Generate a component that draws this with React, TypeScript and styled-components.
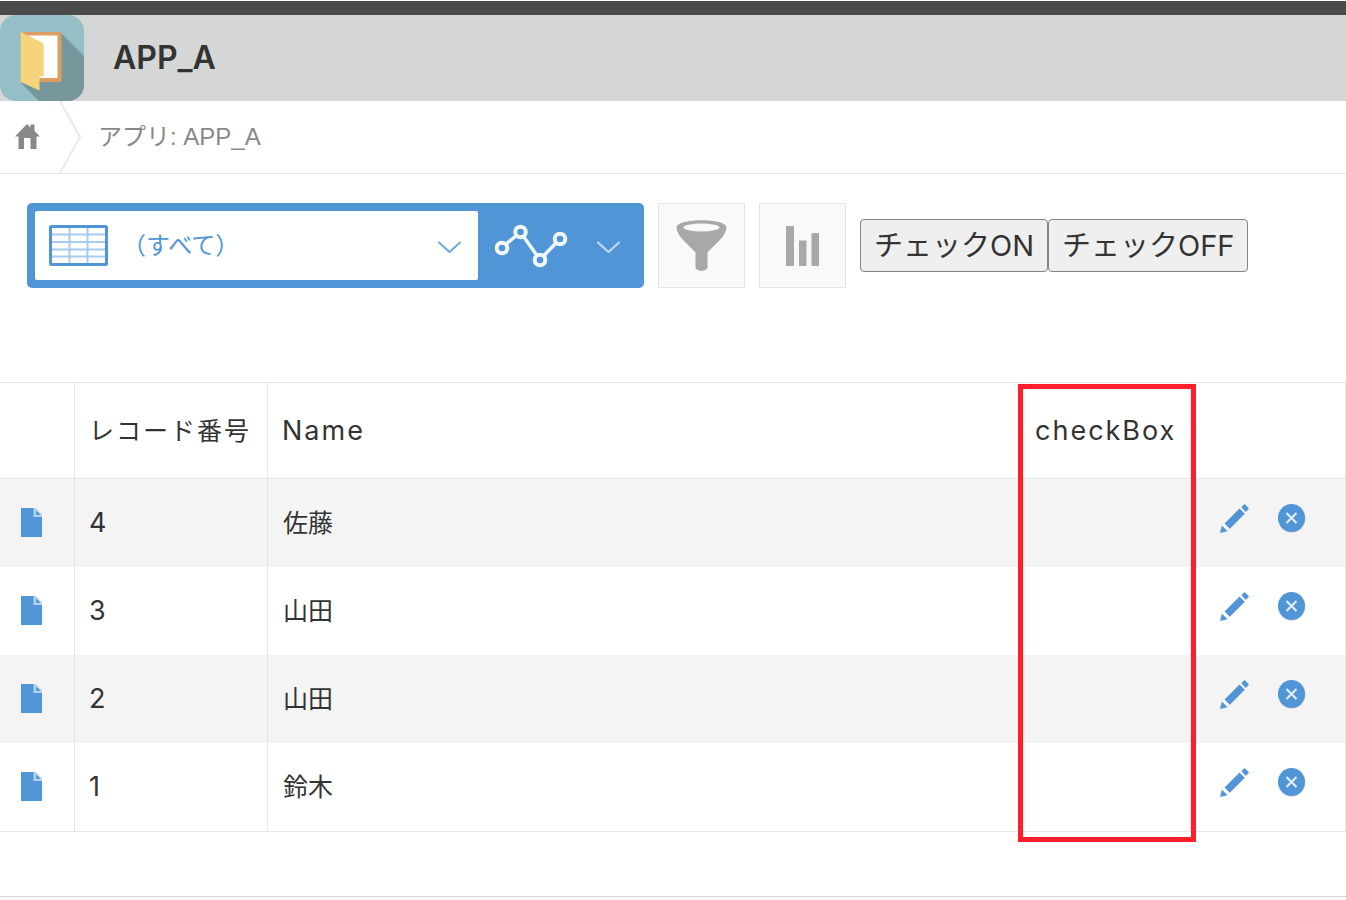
import React from "react";
import styled, { createGlobalStyle } from "styled-components";

const BLUE = "#5096d6";
const LINE = "#e3e7e8";
const TEXT = "#333333";

const GlobalStyle = createGlobalStyle`
  * { box-sizing: border-box; }
  body {
    margin: 0;
    background: #ffffff;
    color: ${TEXT};
    font-family: Inter, "Noto Sans CJK JP", sans-serif;
  }
  svg { display: block; flex: none; }
`;

const TopBar = styled.div`
  height: 15px;
  border-top: 1px solid #ffffff;
  background: #4a4a4a;
`;

const AppHeader = styled.header`
  display: flex;
  align-items: center;
  gap: 29px;
  height: 86px;
  background: #d5d7d6;
`;

const AppTitle = styled.h1`
  margin: 0;
  font-size: 32px;
  line-height: 40px;
  font-weight: 600;
`;

const Breadcrumb = styled.nav`
  display: flex;
  align-items: center;
  height: 73px;
  border-bottom: 1px solid ${LINE};
`;

const HomeLink = styled.a`
  display: flex;
  align-items: center;
  padding: 0 0 2px 15px;
  color: #888888;
`;

const CrumbLink = styled.a`
  padding-left: 15px;
  color: #888888;
  font-family: "Liberation Sans", "Noto Sans CJK JP", sans-serif;
  font-size: 24px;
  line-height: 32px;
  text-decoration: none;
`;

const Toolbar = styled.div`
  display: flex;
  align-items: center;
  gap: 14px;
  padding: 29px 27px 0;
`;

const ViewSelector = styled.div`
  display: flex;
  height: 85px;
  padding: 8px;
  border-radius: 5px;
  background: ${BLUE};
`;

const ViewPicker = styled.label`
  display: flex;
  align-items: center;
  width: 443px;
  padding: 0 17px 0 14px;
  border-radius: 2px;
  background: #ffffff;
`;

const ViewSelect = styled.select`
  flex: 1;
  min-width: 0;
  height: 100%;
  padding: 0 0 0 14px;
  border: 0;
  appearance: none;
  background: transparent;
  color: ${BLUE};
  font-family: inherit;
  font-size: 24px;
`;

const GraphButton = styled.button`
  display: flex;
  align-items: center;
  gap: 29px;
  padding: 0 16px 0 17px;
  border: 0;
  background: transparent;
  color: #f1f6fb;
`;

const SquareButton = styled.button`
  display: flex;
  align-items: center;
  justify-content: center;
  width: 87px;
  height: 85px;
  padding: 0;
  border: 1px solid ${LINE};
  background: #f7f9fa;
  color: #a8a8a8;
`;

const CheckButtons = styled.div`
  display: flex;
`;

const CheckButton = styled.button`
  height: 53px;
  padding: 0 13px;
  border: 1px solid #858585;
  border-radius: 4px;
  background: #efefef;
  color: ${TEXT};
  font-family: inherit;
  font-size: 29px;
  line-height: 40px;
  white-space: nowrap;
`;

const TableArea = styled.main`
  position: relative;
  margin: 94px 0 64px;
`;

const RecordTable = styled.table`
  width: 100%;
  table-layout: fixed;
  border-collapse: separate;
  border-spacing: 0;
  border-top: 1px solid ${LINE};
  border-bottom: 1px solid ${LINE};
`;

const HeadCell = styled.th<{ $width?: number; $latin?: boolean }>`
  width: ${(p) => (p.$width ? `${p.$width}px` : "auto")};
  height: 96px;
  padding: 0 0 0 14px;
  border-right: 1px solid ${LINE};
  border-bottom: 1px solid ${LINE};
  font-size: ${(p) => (p.$latin ? 27 : 25)}px;
  line-height: 32px;
  font-weight: 400;
  letter-spacing: 2px;
  text-align: left;
  white-space: nowrap;
`;

const RecordRow = styled.tr`
  &:nth-child(odd) { background: #f4f4f4; }
`;

const Cell = styled.td`
  height: 88px;
  padding: 0 15px;
  border-right: 1px solid ${LINE};
  font-size: 25px;
  line-height: 32px;
`;

const NumberCell = styled(Cell)`
  padding: 0 14px;
  font-size: 27px;
`;

const OpenCell = styled(Cell)`
  padding: 0 0 4px 21px;
`;

const ActionCell = styled(Cell)`
  padding: 0 0 9px 29px;
`;

const Actions = styled.div`
  display: flex;
  gap: 29px;
`;

const IconLink = styled.a`
  display: inline-block;
  vertical-align: middle;
  color: ${BLUE};
`;

const IconButton = styled.button`
  padding: 0;
  border: 0;
  background: transparent;
  color: ${BLUE};
`;

const ColumnHighlight = styled.div`
  position: absolute;
  top: 2px;
  right: 150px;
  bottom: -10px;
  width: 178px;
  border: 5px solid #ff1f2b;
  pointer-events: none;
`;

const Footer = styled.footer`
  border-top: 1px solid #d4d6d6;
`;

const AppIcon = () => (
  <svg width="84" height="86" viewBox="0 0 84 86" aria-hidden="true">
    <defs>
      <clipPath id="tile">
        <rect width="84" height="86" rx="16" />
      </clipPath>
    </defs>
    <g clipPath="url(#tile)">
      <rect width="84" height="86" fill="#95bfc7" />
      <path d="M61 18 84 41V86H39L21 68Z" fill="#78979c" />
      <rect x="21" y="17" width="40.500" height="50" rx="2" fill="#dc9f62" />
      <path d="M28 20.500H57.500V63H39V28Z" fill="#ffffff" />
      <path d="M20.700 17 41 27Q43.700 28.500 43.700 31V60Q43.700 61.500 42 61.500H39.500V75.500L20.700 67Z" fill="#f7d37c" />
    </g>
  </svg>
);

const HomeIcon = () => (
  <svg width="25" height="25" viewBox="0 0 25 25" fill="currentColor" aria-hidden="true">
    <path d="M12 0 15.500 3.500V0.500H19.500V7L25 12.500H21.500V25H15.500V14H9V25H3.500V12.500H0Z" />
  </svg>
);

const CrumbDivider = () => (
  <svg width="43" height="72" viewBox="0 0 43 72" fill="none" stroke="#e6eaea" strokeWidth="2" aria-hidden="true">
    <path d="M20 0 40 36 20 72" />
  </svg>
);

const TableIcon = () => (
  <svg width="59" height="41" viewBox="0 0 59 41" fill="none" aria-hidden="true">
    <path d="M2 9.500H57M2 17H57M2 24.500H57M2 31.500H57M20.500 2V39M38.500 2V39" stroke="#a5cbed" strokeWidth="2" />
    <rect x="1.500" y="1.500" width="56" height="38" rx="1" stroke={BLUE} strokeWidth="3" />
  </svg>
);

const ChevronIcon = ({ color }: { color: string }) => (
  <svg width="23" height="15" viewBox="0 0 23 15" fill="none" stroke={color} strokeWidth="2" aria-hidden="true">
    <path d="M0.500 4 11.500 14 22.500 4" />
  </svg>
);

const GraphIcon = () => (
  <svg width="73" height="44" viewBox="0 0 73 44" fill="none" stroke="currentColor" strokeWidth="4" aria-hidden="true">
    <circle cx="7" cy="24" r="5.300" />
    <circle cx="25.500" cy="8" r="5.300" />
    <circle cx="45" cy="36" r="5.300" />
    <circle cx="65" cy="15" r="5.300" />
    <path d="M11 20 21.500 11.500M28.500 12.500 42 31.500M48.500 32 61 19" strokeWidth="3.500" />
  </svg>
);

const FunnelIcon = () => (
  <svg width="51" height="51" viewBox="0 0 51 51" aria-hidden="true">
    <path d="M0.500 7.500C0.500 -2.300 50.500 -2.300 50.500 7.500C50.500 16 38 25 31.500 32.500V47C31.500 52 19.500 52 19.500 47V32.500C13 25 0.500 16 0.500 7.500Z" fill="currentColor" />
    <ellipse cx="25.500" cy="7.500" rx="18" ry="4" fill="#f7f9fa" />
  </svg>
);

const BarsIcon = () => (
  <svg width="33" height="40" viewBox="0 0 33 40" fill="currentColor" aria-hidden="true">
    <path d="M0 0H8V40H0ZM13 14.500H20.500V40H13ZM25.500 7H33V40H25.500Z" />
  </svg>
);

const DocIcon = () => (
  <svg width="21" height="29" viewBox="0 0 21 29" aria-hidden="true">
    <path d="M0 0H13L21 8V29H0Z" fill="currentColor" />
    <path d="M12.500 0H14.500L21 6.500V9H12.500Z" fill="#b3d2ee" />
    <path d="M15 2.500 19.500 7H15Z" fill="currentColor" />
  </svg>
);

const PencilIcon = () => (
  <svg width="29" height="29" viewBox="0 0 29 29" fill="currentColor" aria-hidden="true">
    <path d="M0 29 1.800 21.500 7.500 27.200ZM4.500 19.500 19.500 4.500 24.800 9.800 9.800 24.800ZM21.300 3.300 24.600 0 29 4.400 25.900 7.900Z" />
  </svg>
);

const DeleteIcon = () => (
  <svg width="28" height="29" viewBox="0 0 28 29" aria-hidden="true">
    <ellipse cx="14" cy="14.800" rx="13.500" ry="14" fill="#000000" opacity="0.120" />
    <ellipse cx="13.500" cy="14" rx="13.500" ry="14" fill="currentColor" />
    <path d="M8.500 9 18.500 19M18.500 9 8.500 19" stroke="#e8f1fa" strokeWidth="2" />
  </svg>
);

const records = [
  { id: 4, name: "佐藤" },
  { id: 3, name: "山田" },
  { id: 2, name: "山田" },
  { id: 1, name: "鈴木" },
];

export default function App() {
  return (
    <>
      <GlobalStyle />
      <TopBar />
      <AppHeader>
        <AppIcon />
        <AppTitle>APP_A</AppTitle>
      </AppHeader>
      <Breadcrumb>
        <HomeLink href="#home" aria-label="ホーム">
          <HomeIcon />
        </HomeLink>
        <CrumbDivider />
        <CrumbLink href="#app">アプリ: APP_A</CrumbLink>
      </Breadcrumb>
      <Toolbar>
        <ViewSelector>
          <ViewPicker>
            <TableIcon />
            <ViewSelect aria-label="一覧">
              <option>{"\uFF08すべて\uFF09"}</option>
            </ViewSelect>
            <ChevronIcon color="#70a9de" />
          </ViewPicker>
          <GraphButton type="button" aria-label="グラフ">
            <GraphIcon />
            <ChevronIcon color="#c4dbf1" />
          </GraphButton>
        </ViewSelector>
        <SquareButton type="button" aria-label="絞り込む">
          <FunnelIcon />
        </SquareButton>
        <SquareButton type="button" aria-label="集計する">
          <BarsIcon />
        </SquareButton>
        <CheckButtons>
          <CheckButton type="button">チェックON</CheckButton>
          <CheckButton type="button">チェックOFF</CheckButton>
        </CheckButtons>
      </Toolbar>
      <TableArea>
        <RecordTable>
          <thead>
            <tr>
              <HeadCell $width={75} />
              <HeadCell $width={193}>レコード番号</HeadCell>
              <HeadCell $latin>Name</HeadCell>
              <HeadCell $latin $width={170}>checkBox</HeadCell>
              <HeadCell $width={155} />
            </tr>
          </thead>
          <tbody>
            {records.map((record) => (
              <RecordRow key={record.id}>
                <OpenCell>
                  <IconLink href={`#record-${record.id}`} aria-label="詳細">
                    <DocIcon />
                  </IconLink>
                </OpenCell>
                <NumberCell>{record.id}</NumberCell>
                <Cell>{record.name}</Cell>
                <Cell />
                <ActionCell>
                  <Actions>
                    <IconButton type="button" aria-label="編集">
                      <PencilIcon />
                    </IconButton>
                    <IconButton type="button" aria-label="削除">
                      <DeleteIcon />
                    </IconButton>
                  </Actions>
                </ActionCell>
              </RecordRow>
            ))}
          </tbody>
        </RecordTable>
        <ColumnHighlight />
      </TableArea>
      <Footer />
    </>
  );
}
